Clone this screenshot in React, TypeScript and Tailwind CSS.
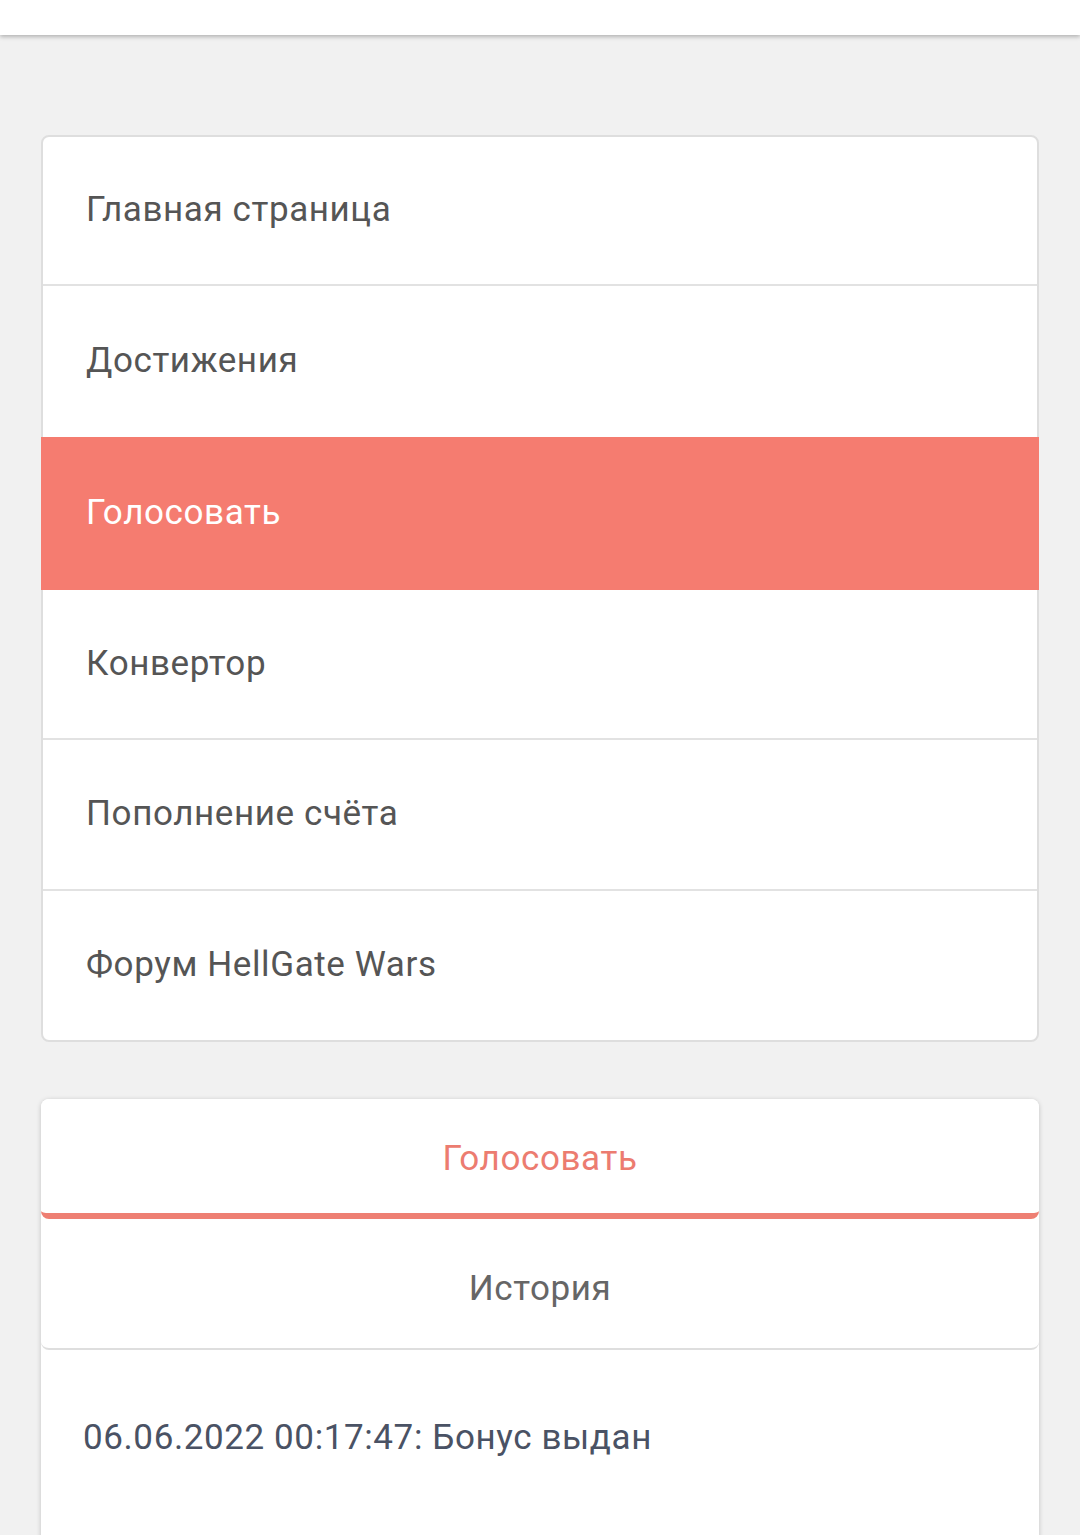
const menu = [
  { label: 'Главная страница', h: 'h-[149px]' },
  { label: 'Достижения', h: 'h-[151px]' },
  { label: 'Голосовать', h: 'h-[153px]' },
  { label: 'Конвертор', h: 'h-[150px]' },
  { label: 'Пополнение счёта', h: 'h-[151px]' },
  { label: 'Форум HellGate Wars', h: 'h-[149px]' },
];

export default function App() {
  const active = 'Голосовать';

  return (
    <div className="min-h-[1535px] overflow-hidden bg-[#f1f1f1] font-['Roboto',sans-serif] text-[35px] tracking-[0.6px]">
      {/* top bar */}
      <div className="h-[35px] bg-white shadow-[0_2px_4px_rgba(0,0,0,0.25)]" />

      <div className="px-[41px] pt-[100px]">
        {/* side menu */}
        <div className="rounded-lg border-2 border-[#dedede] bg-white">
          {menu.map((item, i) => {
            const isActive = item.label === active;
            const next = menu[i + 1];
            return (
              <div
                key={item.label}
                className={
                  isActive
                    ? `-mx-[2px] flex ${item.h} items-center bg-[#f57c70] pl-[45px] text-white`
                    : `flex ${item.h} items-center pl-[43px] text-[#555555] ${
                        next && next.label !== active ? 'border-b-2 border-[#e2e2e2]' : ''
                      }`
                }
              >
                {item.label}
              </div>
            );
          })}
        </div>

        {/* vote panel */}
        <div className="mt-[57px] rounded-lg bg-white shadow-[0_1px_5px_rgba(0,0,0,0.2)]">
          <div className="flex h-[120px] items-center justify-center rounded-lg border-b-[6px] border-[#ee7f73] bg-white pt-[6px] text-[#ec7c70]">
            Голосовать
          </div>
          <div className="flex h-[131px] items-center justify-center rounded-lg border-b-2 border-[#dedede] pt-[12px] text-[#666666]">
            История
          </div>
          <div className="h-[200px] pl-[42px] pt-[62px] text-[#4a5264]">
            06.06.2022 00:17:47: Бонус выдан
          </div>
        </div>
      </div>
    </div>
  );
}
